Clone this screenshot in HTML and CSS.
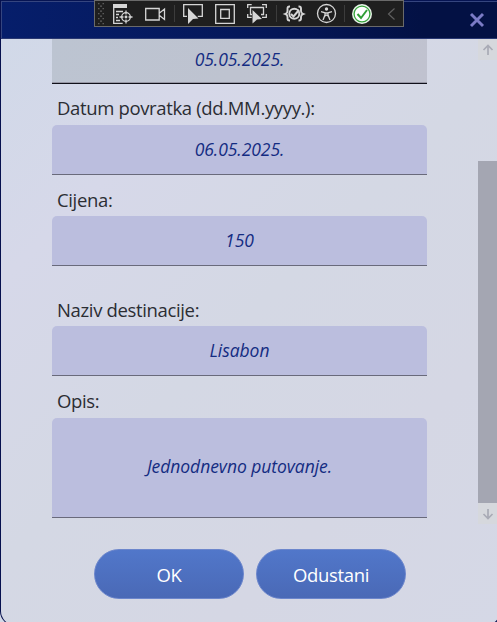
FILE: index.html
```
<!DOCTYPE html>
<html lang="hr">
<head>
<meta charset="utf-8">
<title>Putovanje</title>
<link rel="stylesheet" href="styles.css">
</head>
<body>
<div class="window">
  <header class="titlebar">
    <svg class="close" width="16" height="16" viewBox="0 0 16 16"><path d="M2 2l12 12M14 2L2 14"/></svg>
  </header>
  <main class="body">
    <form class="form">
      <div class="field picked"><span class="value">05.05.2025.</span></div>
      <label class="label l-date"><span>Datum povratka (dd.MM.yyyy.):</span></label>
      <div class="field"><span class="value">06.05.2025.</span></div>
      <label class="label l-price"><span>Cijena:</span></label>
      <div class="field"><span class="value">150</span></div>
      <label class="label l-dest"><span>Naziv destinacije:</span></label>
      <div class="field"><span class="value">Lisabon</span></div>
      <label class="label l-desc"><span>Opis:</span></label>
      <div class="field tall"><span class="value">Jednodnevno putovanje.</span></div>
      <div class="actions">
        <button type="button" class="btn">OK</button>
        <button type="button" class="btn">Odustani</button>
      </div>
    </form>
    <div class="scrollbar">
      <div class="arrow"><svg width="12" height="12" viewBox="0 0 12 12"><path d="M6 11V2M1.500 6L6 1.500L10.500 6"/></svg></div>
      <div class="track"><div class="thumb"></div></div>
      <div class="arrow"><svg width="12" height="12" viewBox="0 0 12 12"><path d="M6 1v9M1.500 6L6 10.500L10.500 6"/></svg></div>
    </div>
  </main>
</div>
<div class="toolbar">
  <svg width="310" height="27" viewBox="94 0 310 27">
    <defs><pattern id="grip" x="98" y="3" width="6" height="5" patternUnits="userSpaceOnUse"><path fill="#5c5c5c" d="M0 0h1.500v1.300H0zM4.500 0H6v1.300H4.500zM2 2.500h2v1.300H2z"/></pattern></defs>
    <rect x="98" y="3" width="6" height="22" fill="url(#grip)"/>
    <g fill="none" stroke="#d6d6d6" stroke-width="1.300">
      <path fill="#d6d6d6" stroke="none" d="M113 4h14v4h-14z"/>
      <path d="M113.700 7v16.300h9M116 11.500h7M116 14.500h3M116 17.500h2M116 20.500h4"/>
      <circle cx="126" cy="17" r="4.300"/><circle cx="126" cy="17" r=".8" fill="#d6d6d6"/>
      <path d="M126 10.500v4M126 19.500v4M119.500 17h4M128.500 17h4"/>
      <path d="M145.700 8.500h13.500v11.500h-13.500zM159.500 13l5-4v10.500l-5-4"/>
      <path d="M187 16.300h-3.300V4.700h18.600v11.600h-4.500"/>
      <path fill="#d6d6d6" stroke="none" d="M188 8l10.500 10.500-5.500.5-5 5z"/>
      <path d="M215.700 4.700h18.600v18.600h-18.600zM220.700 9.500h8.600v8.800h-8.600z"/>
      <path d="M247.700 8V4.700h4M262 4.700h4.300V8M247.700 14v3.300h4M262 17.300h4.300V14M252 14.500h-1.500v-7h13v7H261"/>
      <path fill="#d6d6d6" stroke="none" d="M252.500 10l9.500 9-5 .5-4.500 4z"/>
      <path stroke-width="1.900" d="M290 6.500h-.5q-2 0-2 2v2.500q0 2.300-2 3q2 .7 2 3v1.500q0 2 2 2h.5M298.500 6.500h.5q2 0 2 2v2.500q0 2.300 2 3q-2 .7-2 3v1.500q0 2-2 2h-.5"/>
      <circle cx="294.300" cy="13.800" r="5" stroke-width="1.900"/>
      <path stroke-width="2" d="M291 14l2.500 2.500 5.500-6.500"/>
      <circle cx="326.500" cy="13.500" r="9"/>
      <circle cx="326.500" cy="9" r="1.700" fill="#d6d6d6" stroke="none"/>
      <path d="M321 11.700l4 1.100v2.200l-2 5M332 11.700l-4 1.100v2.200l2 5M325 13h3M325 16l1.500-1 1.500 1"/>
    </g>
    <path fill="none" stroke="#3c3c3c" d="M174.500 5v17M276.500 5v17M344.500 5v17"/>
    <circle cx="362" cy="14" r="10" fill="#e9f4e9"/>
    <circle cx="362" cy="14" r="7.900" fill="#fff" stroke="#37a33b" stroke-width="1.300"/>
    <path d="M357.500 14l3.500 4 6-8" fill="none" stroke="#2f9e35" stroke-width="2"/>
    <path d="M394.500 8.500l-6 5.500 6 5.500" fill="none" stroke="#606060" stroke-width="1.200"/>
  </svg>
</div>
</body>
</html>
```
FILE: styles.css
```
* { box-sizing: border-box; }
body {
  margin: 0;
  height: 622px;
  overflow: hidden;
  position: relative;
  background: #d4d9e7;
  font-family: "Open Sans", "Noto Sans", sans-serif;
}
.window {
  width: 501px;
  height: 626px;
  display: flex;
  flex-direction: column;
  border: 1px solid #06104e;
  border-top: 0;
  border-radius: 0 0 15px 15px;
  background: linear-gradient(135deg, #d0d9e8 0%, #d6d8e9 25%, #d4d8e4 50%, #d5d7e4 75%, #d5d8e6 100%);
}
.titlebar {
  flex: none;
  height: 39px;
  display: flex;
  align-items: center;
  justify-content: flex-end;
  padding: 0 15px 0 0;
  border-top: 1px solid #061453;
  border-bottom: 1px solid #293872;
  box-shadow: inset 0 1px #35457f, inset 1px 0 #35457f;
  background: linear-gradient(90deg, #061e6b, #051758 55%, #031144 85%);
}
.close path { fill: none; stroke: #7b7bc6; stroke-width: 2.900; }
.body { flex: 1; display: flex; justify-content: space-between; padding-right: 3px; }
.form { width: 375px; margin-left: 51px; display: flex; flex-direction: column; }
.field {
  flex: none;
  height: 50px;
  display: flex;
  align-items: center;
  justify-content: center;
  padding-bottom: 2px;
  border-bottom: 1px solid #696a7b;
  border-radius: 5px 5px 0 0;
  background: #bbbede;
}
.field.picked {
  height: 45px;
  padding-bottom: 4px;
  border-radius: 0;
  border-bottom-color: #10101a;
  background: linear-gradient(120deg, #bcc4d1, #c0c2cf);
  box-shadow: inset 0 -1px #9797a5;
}
.field.tall { height: 100px; padding-bottom: 3px; }
.value {
  font-size: 17.500px;
  font-style: italic;
  letter-spacing: -.05px;
  color: #142c82;
  white-space: nowrap;
}
.label {
  flex: none;
  height: 41px;
  padding: 8px 0 0 5px;
  font-size: 18.500px;
  line-height: 34px;
  letter-spacing: -.350px;
  color: #2b2d33;
  white-space: nowrap;
}
.l-date { line-height: 31px; }
.l-price { line-height: 33px; }
.l-dest { margin-top: 19px; }
.l-desc { height: 42px; }
.actions { display: flex; gap: 12px; margin: 31px 0 0 42px; }
.btn {
  flex: none;
  width: 150px;
  height: 50px;
  padding: 0;
  border: 1px solid #6c86cc;
  border-radius: 25px;
  background: linear-gradient(#5177ca, #4a69b6);
  color: #fff;
  font: 18.500px "Open Sans", "Noto Sans", sans-serif;
  letter-spacing: -.350px;
}
.scrollbar { width: 19px; height: 485px; display: flex; flex-direction: column; }
.arrow {
  height: 21px;
  display: flex;
  align-items: center;
  justify-content: center;
  background: #d6d8dd;
}
.arrow path { fill: none; stroke: #a9abb6; stroke-width: 1.700; }
.track { flex: 1; padding-top: 101px; }
.thumb { height: 100%; background: #a4a6b2; }
.toolbar {
  position: absolute;
  left: 94px;
  top: 0;
  width: 310px;
  height: 27px;
  background: #1f1f1f;
  box-shadow: inset 0 0 0 1px #6a6a6a;
}
.toolbar svg { display: block; }
```
